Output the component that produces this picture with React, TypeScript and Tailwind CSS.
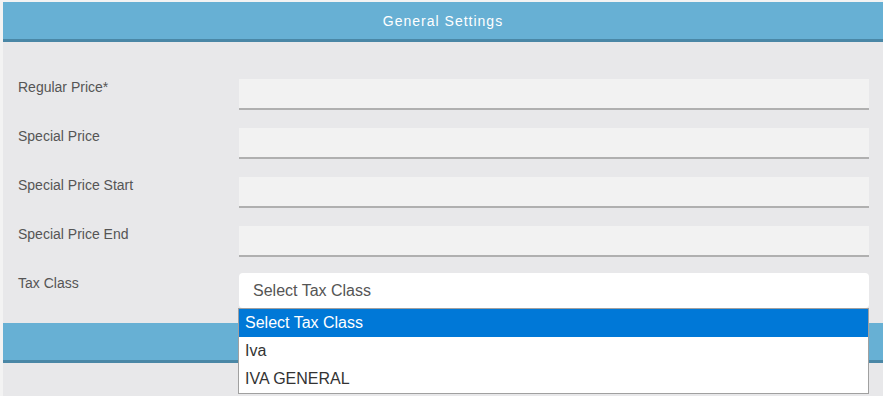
import React from "react";

const fields = ["Regular Price*", "Special Price", "Special Price Start", "Special Price End"];
const taxOptions = ["Select Tax Class", "Iva", "IVA GENERAL"];

export default function App() {
  return (
    <div
      className="h-[396px] w-[883px] overflow-hidden bg-[#f3f3f3] pl-[3px] pt-[2px]"
      style={{ fontFamily: '"Liberation Sans", Arial, sans-serif' }}
    >
      <div className="h-full bg-[#e8e8ea]">
        {/* header */}
        <div className="flex h-[40px] items-center justify-center border-b-[3px] border-[#4a87a6] bg-[#67b0d4] pt-[1px] text-[14px] tracking-[1px] text-white">
          General Settings
        </div>

        <div className="flex flex-col gap-[18px] pl-[15px] pr-[14px] pt-[37px]">
          {fields.map((label) => (
            <div key={label} className="flex">
              <label className="w-[221px] text-[14px] leading-[16px] text-[#555]">{label}</label>
              <div className="h-[31px] flex-1 border-b-2 border-[#b0b0b0] bg-[#f2f2f2]" />
            </div>
          ))}

          {/* tax class */}
          <div className="-mt-[2px] flex">
            <label className="w-[221px] pt-[2px] text-[14px] leading-[16px] text-[#555]">Tax Class</label>
            <div className="relative flex-1">
              <div className="flex h-[35px] items-center rounded-[4px] bg-white pl-[14px] text-[16px] text-[#555]">
                Select Tax Class
              </div>
              <div className="absolute left-[-1px] right-0 top-[35px] z-10 border border-[#a0a0a0] bg-white">
                {taxOptions.map((opt, i) => (
                  <div
                    key={opt}
                    className={
                      i === 0
                        ? "flex h-[28px] items-center bg-[#0078d7] pl-[6px] text-[16px] text-white"
                        : "flex h-[28px] items-center pl-[6px] text-[16px] text-[#333]"
                    }
                  >
                    {opt}
                  </div>
                ))}
              </div>
            </div>
          </div>
        </div>

        {/* next section header */}
        <div className="mt-[15px] h-[40px] border-b-[3px] border-[#4a87a6] bg-[#67b0d4]" />
      </div>
    </div>
  );
}
